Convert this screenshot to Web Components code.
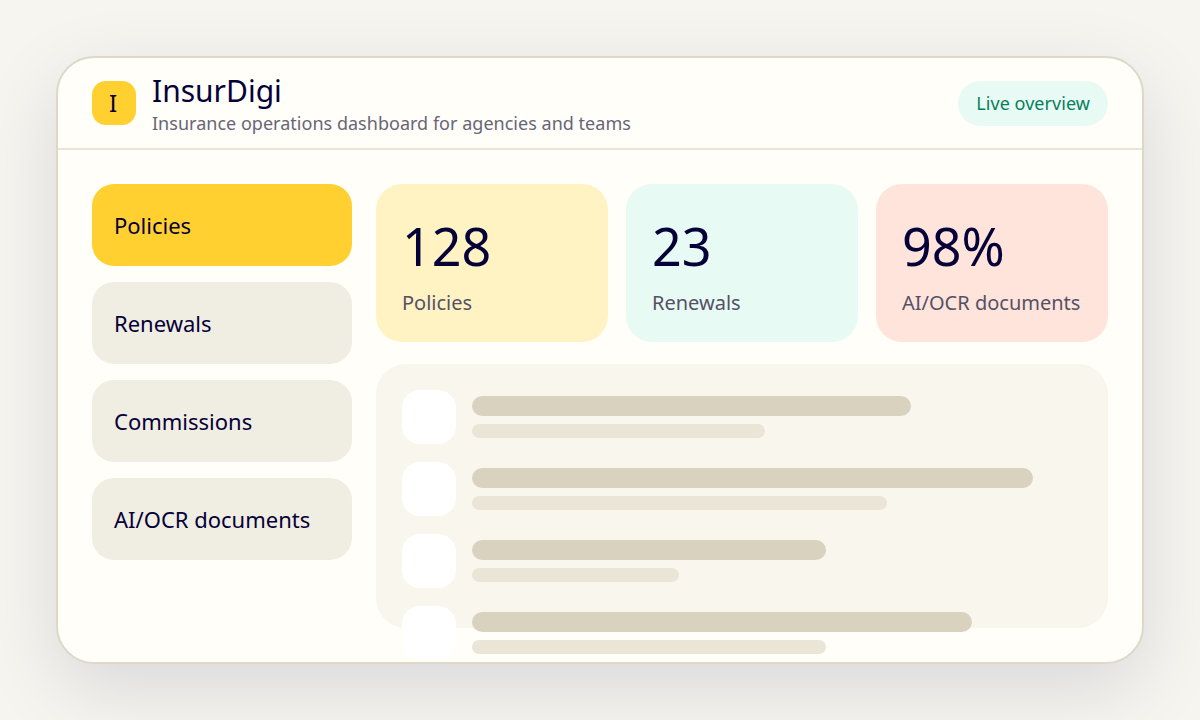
<!DOCTYPE html>
<html lang="en">
<head>
<meta charset="utf-8">
<title>InsurDigi</title>
<style>
    body {
        margin: 0;
        height: 720px;
        padding: 56px;
        box-sizing: border-box;
        overflow: hidden;
        background: #f6f5f0;
        color: #050038;
        font-family: "Noto Sans", sans-serif;
    }
</style>
</head>
<body>
<dashboard-card>
    <app-header slot="header" logo="I">
        <span slot="title">InsurDigi</span>
        <span slot="subtitle">Insurance operations dashboard for agencies and teams</span>
        <status-pill slot="status">Live overview</status-pill>
    </app-header>
    <nav-item slot="nav" active>Policies</nav-item>
    <nav-item slot="nav">Renewals</nav-item>
    <nav-item slot="nav">Commissions</nav-item>
    <nav-item slot="nav">AI/OCR documents</nav-item>
    <metric-card slot="metrics" value="128" style="--tone:#fff3c4">Policies</metric-card>
    <metric-card slot="metrics" value="23" style="--tone:#e7faf4">Renewals</metric-card>
    <metric-card slot="metrics" value="98%" style="--tone:#ffe4dc">AI/OCR documents</metric-card>
    <list-row slot="rows" long="72%" short="48%"></list-row>
    <list-row slot="rows" long="92%" short="68%"></list-row>
    <list-row slot="rows" long="58%" short="34%"></list-row>
    <list-row slot="rows" long="82%" short="58%"></list-row>
</dashboard-card>

<script>
'use strict'

class BaseElement extends HTMLElement {
    constructor () {
        super();
        this.attachShadow({mode:'open'})
        this.shadowRoot.innerHTML = this.constructor.markup
    }
}

class DashboardCard extends BaseElement {
    static markup = `
        <style>
            :host {
                display: flex;
                flex-direction: column;
                height: 608px;
                box-sizing: border-box;
                border: 2px solid #ded8c8;
                border-radius: 38px;
                background: #fffef8;
                box-shadow: 0 24px 80px rgba(5, 0, 56, 0.12);
                overflow: hidden;
            }
            .body {
                flex: 1;
                min-height: 0;
                box-sizing: border-box;
                display: grid;
                grid-template-columns: 260px 1fr;
                gap: 24px;
                padding: 34px;
            }
            .nav {
                display: flex;
                flex-direction: column;
                gap: 16px;
            }
            .main {
                display: flex;
                flex-direction: column;
                gap: 22px;
                min-height: 0;
            }
            .metrics {
                display: grid;
                grid-template-columns: repeat(3, 1fr);
                gap: 18px;
            }
            /* rows keep their height and run past the panel */
            .panel {
                flex: 1;
                min-height: 0;
                box-sizing: border-box;
                display: flex;
                flex-direction: column;
                gap: 18px;
                padding: 26px;
                border-radius: 30px;
                background: #f9f6ee;
            }
        </style>
        <slot name="header"></slot>
        <div class="body">
            <div class="nav"><slot name="nav"></slot></div>
            <div class="main">
                <div class="metrics"><slot name="metrics"></slot></div>
                <div class="panel"><slot name="rows"></slot></div>
            </div>
        </div>
    `
}

class AppHeader extends BaseElement {
    static markup = `
        <style>
            :host {
                display: flex;
                align-items: center;
                gap: 16px;
                flex: none;
                height: 92px;
                box-sizing: border-box;
                padding: 0 34px;
                border-bottom: 2px solid #ebe5d8;
            }
            .logo {
                display: grid;
                place-items: center;
                width: 44px;
                height: 44px;
                box-sizing: border-box;
                padding: 0 2px 2px 0;
                border-radius: 14px;
                background: #ffd02f;
                font-size: 24px;
            }
            .text {
                flex: 1;
            }
            .title {
                font-size: 30px;
            }
            .subtitle {
                padding-bottom: 1px;
                font-size: 18px;
                letter-spacing: 0.02px;
                color: #696578;
            }
        </style>
        <div class="logo"></div>
        <div class="text">
            <div class="title"><slot name="title"></slot></div>
            <div class="subtitle"><slot name="subtitle"></slot></div>
        </div>
        <slot name="status"></slot>
    `
    connectedCallback () {
        this.shadowRoot.querySelector('.logo').textContent = this.getAttribute('logo')
    }
}

class StatusPill extends BaseElement {
    static markup = `
        <style>
            :host {
                display: block;
                padding: 10px 18px 11px;
                border-radius: 999px;
                background: #e7faf4;
                color: #087f5b;
                font-size: 18px;
                letter-spacing: 0.05px;
            }
        </style>
        <slot></slot>
    `
}

class NavItem extends BaseElement {
    static markup = `
        <style>
            :host {
                display: block;
                padding: 26px 22px;
                border-radius: 22px;
                background: #f0eee2;
                font-size: 22px;
            }
            :host([active]) {
                background: #ffd02f;
            }
        </style>
        <slot></slot>
    `
}

class MetricCard extends BaseElement {
    static markup = `
        <style>
            :host {
                display: block;
                padding: 26px;
                border-radius: 26px;
                background: var(--tone);
            }
            .value {
                font-size: 52px;
            }
            .label {
                margin-top: 8px;
                font-size: 20px;
                color: #555165;
                white-space: nowrap;
            }
        </style>
        <div class="value"></div>
        <div class="label"><slot></slot></div>
    `
    connectedCallback () {
        this.shadowRoot.querySelector('.value').textContent = this.getAttribute('value')
    }
}

class ListRow extends BaseElement {
    static markup = `
        <style>
            :host {
                display: flex;
                align-items: center;
                gap: 16px;
                flex: none;
            }
            .thumb {
                width: 54px;
                height: 54px;
                border-radius: 18px;
                background: #fff;
            }
            .lines {
                flex: 1;
                display: grid;
                gap: 8px;
            }
            .long {
                height: 20px;
                border-radius: 10px;
                background: #d9d2bf;
            }
            .short {
                height: 14px;
                border-radius: 7px;
                background: #ebe5d8;
            }
        </style>
        <div class="thumb"></div>
        <div class="lines">
            <div class="long"></div>
            <div class="short"></div>
        </div>
    `
    connectedCallback () {
        this.shadowRoot.querySelector('.long').style.width = this.getAttribute('long')
        this.shadowRoot.querySelector('.short').style.width = this.getAttribute('short')
    }
}

customElements.define('dashboard-card', DashboardCard)
customElements.define('app-header', AppHeader)
customElements.define('status-pill', StatusPill)
customElements.define('nav-item', NavItem)
customElements.define('metric-card', MetricCard)
customElements.define('list-row', ListRow)
</script>
</body>
</html>
